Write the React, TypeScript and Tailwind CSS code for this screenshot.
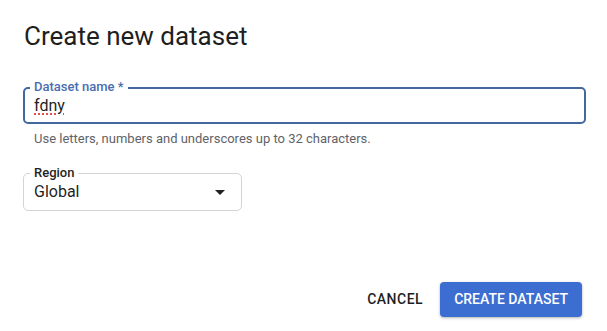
import React from 'react';

const App: React.FC = () => {
  return (
    <div className="w-[607px] h-[331px] bg-white font-['Roboto',sans-serif] text-[#202124] flex flex-col pl-[23px] pr-[21px]">
      <h1 className="pt-[20px] pl-[1px] text-[26px] leading-[32px] font-normal text-[#1f1f1f]">
        Create new dataset
      </h1>

      <div className="mt-[35px] relative h-[37px] border-2 border-[#44679f] rounded-[5px] flex items-center px-[9px]">
        <span className="absolute -top-[10px] left-[5px] px-1 bg-white text-[13px] leading-[16px] font-medium text-[#4a6db0]">
          Dataset name *
        </span>
        <span className="text-[16px] text-[#1f1f1f] underline decoration-dotted decoration-[#e0524a] decoration-2 underline-offset-[3px]">
          fdny
        </span>
      </div>
      <p className="mt-[7px] pl-[11px] text-[13px] leading-[16px] text-[#5f6368]">
        Use letters, numbers and underscores up to 32 characters.
      </p>

      <div className="mt-[26px] relative w-[219px] h-[38px] border border-[#d2d4d8] rounded-[5px] flex items-center justify-between pl-[10px] pr-[9px]">
        <span className="absolute -top-[9px] left-[6px] px-1 bg-white text-[13px] leading-[16px] font-medium text-[#1f1f1f]">
          Region
        </span>
        <span className="text-[16px] text-[#1f1f1f]">Global</span>
        <svg viewBox="0 0 24 24" className="w-6 h-6 fill-[#202124]">
          <path d="M7 10l5 5 5-5z" />
        </svg>
      </div>

      <div className="mt-auto mb-[14px] flex items-center justify-end gap-[13px] pr-[4px]">
        <button className="px-1 h-[36px] text-[14px] font-medium tracking-[0.5px] text-[#1f1f1f]">
          CANCEL
        </button>
        <button className="h-[35px] px-[14px] rounded-[4px] bg-[#3c6ed2] text-white text-[14px] font-medium shadow-[0_1px_3px_rgba(0,0,0,0.3)]">
          CREATE DATASET
        </button>
      </div>
    </div>
  );
};

export default App;
